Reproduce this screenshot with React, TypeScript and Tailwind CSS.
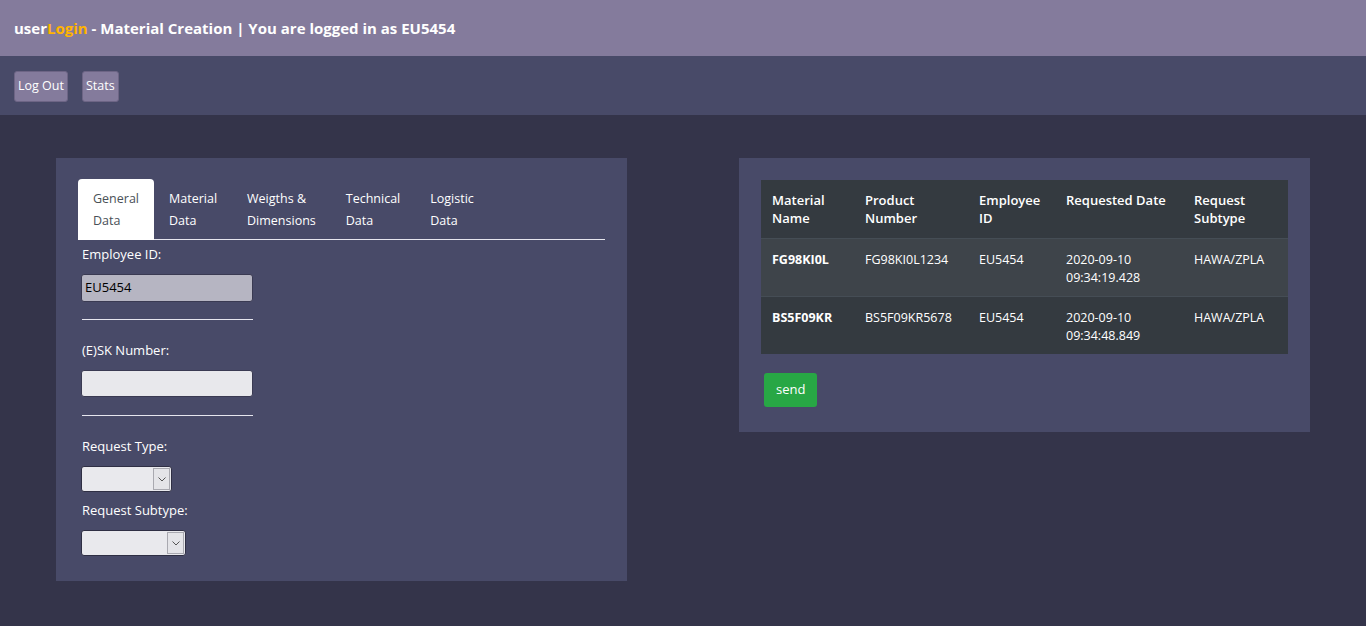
import React from "react";

interface Row {
  material: string;
  product: string;
  employee: string;
  date: string;
  time: string;
  subtype: string;
}

const rows: Row[] = [
  { material: "FG98KI0L", product: "FG98KI0L1234", employee: "EU5454", date: "2020-09-10", time: "09:34:19.428", subtype: "HAWA/ZPLA" },
  { material: "BS5F09KR", product: "BS5F09KR5678", employee: "EU5454", date: "2020-09-10", time: "09:34:48.849", subtype: "HAWA/ZPLA" },
];

const tabs = [
  ["General", "Data"],
  ["Material", "Data"],
  ["Weigths &", "Dimensions"],
  ["Technical", "Data"],
  ["Logistic", "Data"],
];

const Select = ({ width }: { width: string }) => (
  <div className={`flex h-[26px] ${width} rounded-[3px] border border-[#2f2f44] bg-[#e9e9ed] p-[1px]`}>
    <div className="flex-1" />
    <span className="flex w-[17px] items-center justify-center border border-[#a9a9b0] bg-[#e4e4e8]">
      <svg width="8" height="5" viewBox="0 0 8 5" fill="none">
        <path d="M0.5 0.5 L4 4 L7.5 0.5" stroke="#555" strokeWidth="1" />
      </svg>
    </span>
  </div>
);

export default function App() {
  return (
    <div
      className="min-h-[626px] bg-[#34344a] text-[13px] text-white"
      style={{ fontFamily: '"Open Sans", "Noto Sans", sans-serif' }}
    >
      {/* Title bar */}
      <div className="flex h-[56px] items-center bg-[#847b9c] px-[14px]">
        <h1 className="text-[15px] font-bold">
          user<span className="text-[#ffb400]">Login</span> - Material Creation | You are logged in as EU5454
        </h1>
      </div>

      {/* Nav bar */}
      <div className="flex h-[59px] items-center gap-[14px] bg-[#484a68] px-[14px] pt-[1px]">
        <button className="h-[31px] rounded-[3px] border border-[#6d6585] bg-[#847b9c] px-[3px] text-[12.5px]">Log Out</button>
        <button className="h-[31px] rounded-[3px] border border-[#6d6585] bg-[#847b9c] px-[3px] text-[12.5px]">Stats</button>
      </div>

      <div className="flex items-start justify-between px-[56px] pt-[43px]">
        {/* Left form panel */}
        <div className="w-[571px] bg-[#484a68] px-[22px] pb-[25px] pt-[21px]">
          <div className="flex border-b border-[#e6e6ee] text-[12.5px]">
            {tabs.map((t, i) => (
              <div
                key={i}
                className={
                  i === 0
                    ? "-mb-px rounded-t-[4px] bg-white px-[15px] pb-[7px] pt-[9px] leading-[22px] text-[#495057]"
                    : "px-[15px] pb-[7px] pt-[9px] leading-[22px]"
                }
              >
                <div>{t[0]}</div>
                <div>{t[1]}</div>
              </div>
            ))}
          </div>

          <div className="px-[4px]">
            <label className="mt-[4px] block leading-[20px]">Employee ID:</label>
            <div className="mt-[10px] flex h-[28px] w-[172px] -translate-x-[1px] items-center rounded-[3px] border border-[#3a3a52] bg-[#b6b5c2] px-[3px] text-[13px] text-black">
              EU5454
            </div>
            <hr className="mt-[17px] w-[171px] border-t border-[#e6e6ee]" />

            <label className="mt-[20px] block leading-[20px]">(E)SK Number:</label>
            <div className="mt-[10px] h-[27px] w-[172px] -translate-x-[1px] rounded-[3px] border border-[#3a3a52] bg-[#e8e8ec]" />
            <hr className="mt-[18px] w-[171px] border-t border-[#e6e6ee]" />

            <label className="mt-[20px] block leading-[20px]">Request Type:</label>
            <div className="mt-[10px] -translate-x-[1px]">
              <Select width="w-[91px]" />
            </div>
            <label className="mt-[8px] block leading-[20px]">Request Subtype:</label>
            <div className="mt-[10px] -translate-x-[1px]">
              <Select width="w-[105px]" />
            </div>
          </div>
        </div>

        {/* Right table panel */}
        <div className="w-[571px] bg-[#484a68] px-[22px] pb-[25px] pt-[22px]">
          <table className="w-full border-collapse text-left">
            <thead className="bg-[#343a40]">
              <tr className="h-[58px] align-top">
                <th className="w-[93px] px-[11px] pt-[11px] leading-[18px] font-semibold">Material<br />Name</th>
                <th className="w-[114px] px-[11px] pt-[11px] leading-[18px] font-semibold">Product<br />Number</th>
                <th className="w-[87px] px-[11px] pt-[11px] leading-[18px] font-semibold">Employee<br />ID</th>
                <th className="w-[128px] px-[11px] pt-[11px] leading-[18px] font-semibold">Requested Date</th>
                <th className="px-[11px] pt-[11px] leading-[18px] font-semibold">Request<br />Subtype</th>
              </tr>
            </thead>
            <tbody className="text-[12.5px]">
              {rows.map((r, i) => (
                <tr
                  key={i}
                  className={`h-[58px] border-t border-[#454d55] align-top ${i === 0 ? "bg-[#3e444a]" : "bg-[#343a40]"}`}
                >
                  <td className="px-[11px] pt-[12px] leading-[18px] font-bold">{r.material}</td>
                  <td className="px-[11px] pt-[12px] leading-[18px]">{r.product}</td>
                  <td className="px-[11px] pt-[12px] leading-[18px]">{r.employee}</td>
                  <td className="px-[11px] pt-[12px] leading-[18px]">
                    {r.date}
                    <br />
                    {r.time}
                  </td>
                  <td className="px-[11px] pt-[12px] leading-[18px]">{r.subtype}</td>
                </tr>
              ))}
            </tbody>
          </table>
          <button className="ml-[3px] mt-[19px] h-[34px] rounded-[3px] bg-[#28a745] px-[12px] text-[13px]">send</button>
        </div>
      </div>
    </div>
  );
}
